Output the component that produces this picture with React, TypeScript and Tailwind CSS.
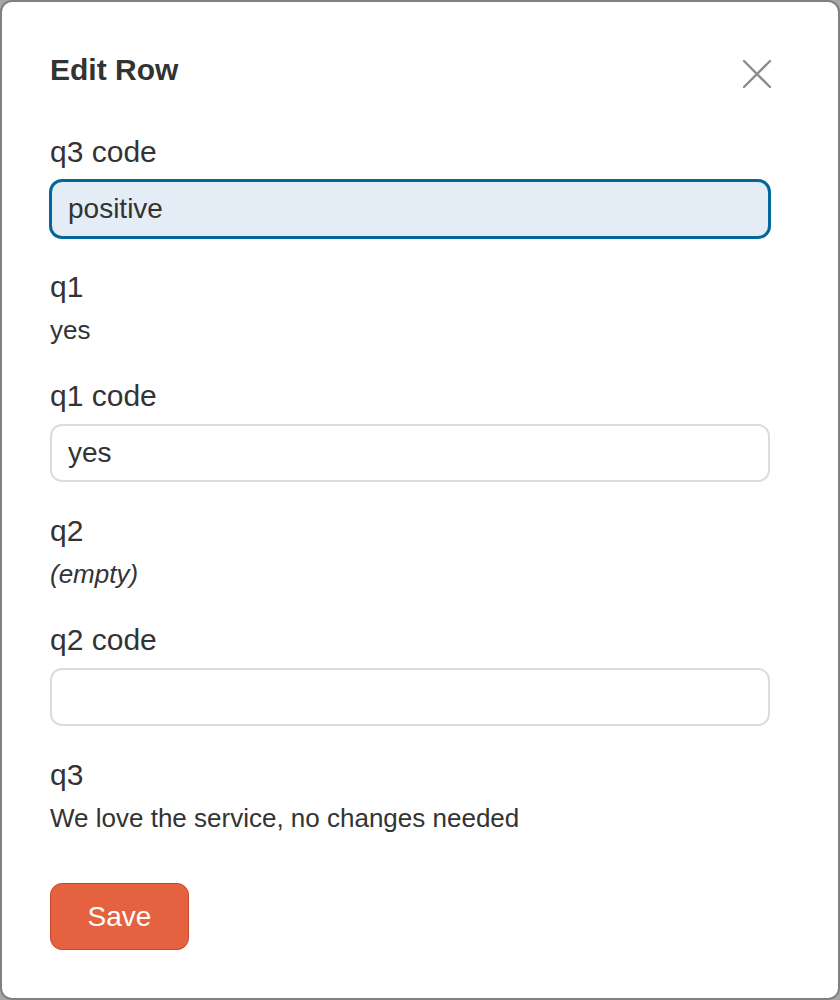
const font = { fontFamily: '"Liberation Sans", Arial, sans-serif' }

function Label({ children }: { children: React.ReactNode }) {
  return <div className="mb-[11px] text-[30px] leading-[34px] text-[#333333]">{children}</div>
}

function Field({ label, value, focused }: { label: string; value: string; focused?: boolean }) {
  return (
    <div>
      <Label>{label}</Label>
      <input
        type="text"
        defaultValue={value}
        className={
          focused
            ? 'block h-[58px] w-full rounded-[12px] border-2 border-[#04669a] bg-[#e4ecf5] px-4 text-[28px] text-[#333333] shadow-[0_0_0_1px_#04669a] outline-none'
            : 'block h-[58px] w-full rounded-[12px] border-2 border-[#dcdcdc] bg-white px-4 text-[28px] text-[#333333] outline-none'
        }
        style={font}
      />
    </div>
  )
}

function Value({ label, children, italic }: { label: string; children: React.ReactNode; italic?: boolean }) {
  return (
    <div>
      <Label>{label}</Label>
      <div className={italic ? 'pb-[2px] text-[26px] italic leading-[30px] text-[#333333]' : 'pb-[2px] text-[26px] leading-[30px] text-[#333333]'}>
        {children}
      </div>
    </div>
  )
}

export default function App() {
  return (
    <div className="h-[1000px] w-[840px] bg-[#a6a6a6]" style={font}>
      <div className="h-full w-full rounded-[12px] border-2 border-[#808080] bg-white">
        <div className="ml-[48px] w-[721px] pt-[50px]">
          <div className="flex items-start justify-between">
            <h2 className="text-[30px] font-bold leading-[36px] text-[#333333]">Edit Row</h2>
            <button type="button" className="mt-[7px] -mr-px text-[#8c8c8c]" aria-label="Close">
              <svg width="30" height="30" viewBox="0 0 30 30" fill="none" stroke="currentColor" strokeWidth="2.4" strokeLinecap="round">
                <path d="M2 2L28 28M28 2L2 28" />
              </svg>
            </button>
          </div>

          <div className="mt-[46px] flex w-[720px] flex-col gap-[32px]">
            <Field label="q3 code" value="positive" focused />
            <Value label="q1">yes</Value>
            <Field label="q1 code" value="yes" />
            <Value label="q2" italic>(empty)</Value>
            <Field label="q2 code" value="" />
            <Value label="q3">We love the service, no changes needed</Value>
          </div>

          <button
            type="button"
            className="mt-[48px] h-[67px] w-[139px] rounded-[12px] border border-[#c4482c] bg-[#e46240] text-[28px] text-white"
            style={font}
          >
            Save
          </button>
        </div>
      </div>
    </div>
  )
}
